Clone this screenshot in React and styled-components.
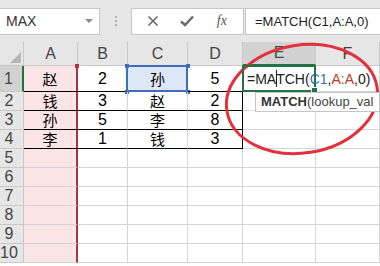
import React from "react";
import styled, { createGlobalStyle } from "styled-components";

const GlobalStyle = createGlobalStyle`
  html, body {
    margin: 0;
    padding: 0;
    background: #fff;
  }
  body {
    width: 380px;
    height: 266px;
    overflow: hidden;
    font-family: "Liberation Sans", "Noto Sans CJK SC", sans-serif;
  }
`;

const GREEN = "#217346";
const RED = "#a8363f";
const BLUE = "#3e6dbb";

const columns = ["A", "B", "C", "D", "E", "F"];

const tableData = [
  ["赵", "2", "孙", "5"],
  ["钱", "3", "赵", "2"],
  ["孙", "5", "李", "8"],
  ["李", "1", "钱", "3"]
];

const Sheet = styled.div`
  position: relative;
  width: 380px;
  height: 266px;
  overflow: hidden;
  background: #fff;
`;

// ============ Formula bar ============
const Toolbar = styled.div`
  display: flex;
  align-items: center;
  height: 42px;
  background: #e6e6e6;
`;

const NameBox = styled.div`
  display: flex;
  align-items: center;
  justify-content: space-between;
  box-sizing: border-box;
  width: 101px;
  height: 27px;
  margin-left: -1px;
  padding: 0 6px 0 6px;
  background: #fff;
  border: 1px solid #c6c6c6;
  font-size: 14px;
  color: #333;
`;

const Caret = styled.span`
  width: 0;
  height: 0;
  border-left: 4px solid transparent;
  border-right: 4px solid transparent;
  border-top: 4px solid #8a8a8a;
`;

const Grip = styled.div`
  display: flex;
  flex-direction: column;
  gap: 2px;
  margin: 0 14px 0 15px;
`;

const GripDot = styled.span`
  width: 2px;
  height: 2px;
  background: #b0b0b0;
`;

const ButtonGroup = styled.div`
  display: flex;
  align-items: center;
  justify-content: space-around;
  box-sizing: border-box;
  width: 113px;
  height: 27px;
  padding: 0 4px;
  background: #fff;
  border: 1px solid #c6c6c6;
`;

const IconButton = styled.span`
  display: flex;
  align-items: center;
  justify-content: center;
  width: 24px;
  color: #555;
  font-family: "Liberation Serif", serif;
  font-style: italic;
  font-size: 14px;
`;

const FormulaInput = styled.div`
  display: flex;
  align-items: center;
  box-sizing: border-box;
  flex: 1;
  height: 27px;
  margin-left: 1px;
  padding-left: 9px;
  background: #fff;
  border: 1px solid #c6c6c6;
  border-right: none;
  font-size: 13px;
  color: #222;
  white-space: nowrap;
`;

// ============ Grid ============
const Grid = styled.div`
  display: grid;
  grid-template-columns: 24px 54px 50px 60px 55px 73px 64px;
  grid-template-rows: 24px 26px repeat(10, 19px);
`;

const Corner = styled.div`
  position: relative;
  box-sizing: border-box;
  background: #e6e6e6;
  border-right: 1px solid #c8c8c8;
  border-bottom: 1px solid #c8c8c8;

  &::after {
    content: "";
    position: absolute;
    right: 2px;
    bottom: 2px;
    width: 0;
    height: 0;
    border-left: 11px solid transparent;
    border-bottom: 11px solid #b6b6b6;
  }
`;

const ColHeader = styled.div`
  display: flex;
  align-items: flex-end;
  justify-content: center;
  box-sizing: border-box;
  padding-bottom: 2px;
  background: ${({ $active }) => ($active ? "#d2d2d2" : "#e6e6e6")};
  border-right: 1px solid #c8c8c8;
  border-bottom: ${({ $active }) =>
    $active ? `2px solid ${GREEN}` : "1px solid #c8c8c8"};
  font-family: "Liberation Sans", sans-serif;
  font-size: 16px;
  line-height: 18px;
  color: ${({ $active }) => ($active ? "#2a5a3a" : "#444")};
`;

const RowHeader = styled.div`
  display: flex;
  align-items: center;
  justify-content: center;
  box-sizing: border-box;
  padding-right: 5px;
  background: ${({ $active }) => ($active ? "#d2d2d2" : "#e6e6e6")};
  border-right: ${({ $active }) =>
    $active ? `2px solid ${GREEN}` : "1px solid #c8c8c8"};
  border-bottom: 1px solid #c8c8c8;
  font-family: "Liberation Sans", sans-serif;
  font-size: 16px;
  line-height: 16px;
  color: #444;
`;

const Cell = styled.div`
  position: relative;
  display: flex;
  align-items: center;
  justify-content: center;
  box-sizing: border-box;
  padding: 0 5px;
  background: ${({ $bg }) => $bg || "transparent"};
  border-right: ${({ $right }) => $right || "1px solid #d4d4d4"};
  border-bottom: ${({ $bottom }) => $bottom || "1px solid #d4d4d4"};
  font-family: ${({ $cjk }) =>
    $cjk ? `"Noto Sans CJK SC", sans-serif` : `"Liberation Sans", sans-serif`};
  font-size: ${({ $cjk }) => ($cjk ? "15px" : "16px")};
  line-height: 16px;
  color: #000;
  white-space: nowrap;
`;

const Handle = styled.span`
  position: absolute;
  width: 4px;
  height: 4px;
  background: ${({ $color }) => $color};
  ${({ $top }) => ($top ? "top: -2px;" : "bottom: -3px;")}
  ${({ $left }) => ($left ? "left: -3px;" : "right: -3px;")}
`;

const RefFrame = styled.span`
  position: absolute;
  inset: -1px -1px -1px -2px;
  border: 2px solid ${({ $color }) => $color};
  pointer-events: none;
`;

const ActiveCell = styled(Cell)`
  z-index: 2;
  justify-content: flex-start;
  overflow: visible;
  padding-left: 4px;
  font-family: "Liberation Sans", sans-serif;
  font-size: 14px;
  color: #222;
`;

const ActiveFrame = styled.span`
  position: absolute;
  inset: -1px -1px -1px -1px;
  border: 2px solid ${GREEN};
  pointer-events: none;

  &::after {
    content: "";
    position: absolute;
    right: -4px;
    bottom: -4px;
    width: 5px;
    height: 5px;
    background: ${GREEN};
    border: 1px solid #fff;
  }
`;

const Ref = styled.span`
  color: ${({ $color }) => $color};
`;

const Cursor = styled.span`
  display: inline-block;
  width: 1px;
  height: 17px;
  margin: 0 -1px 0 0;
  vertical-align: -3px;
  background: #222;
`;

const Tooltip = styled.div`
  position: absolute;
  top: calc(100% + 1px);
  left: 12px;
  padding: 1px 6px 2px 5px;
  background: #fff;
  border: 1px solid #c6c6c6;
  font-family: "Liberation Sans", sans-serif;
  font-size: 13px;
  line-height: 15px;
  color: #444;
  white-space: nowrap;
`;

const Bold = styled.b`
  font-weight: 700;
  color: #333;
`;

const Annotation = styled.svg`
  position: absolute;
  top: 0;
  left: 0;
  pointer-events: none;
`;

const CloseIcon = () => (
  <svg width="12" height="12" viewBox="0 0 12 12">
    <path d="M1.5 1.5 L10.5 10.5 M10.5 1.5 L1.5 10.5" stroke="#6a6a6a" strokeWidth="1.6" />
  </svg>
);

const CheckIcon = () => (
  <svg width="14" height="12" viewBox="0 0 14 12">
    <path d="M1 6.5 L5 10 L13 1.5" stroke="#6a6a6a" strokeWidth="2.4" fill="none" />
  </svg>
);

const BLACK = "1px solid #000";

const App = () => {
  const rows = Array.from({ length: 10 }, (_, i) => i + 1);

  const renderCell = (row, colIdx) => {
    const key = `${row}-${colIdx}`;
    const inTable = row <= 4 && colIdx <= 3;
    const value = inTable ? tableData[row - 1][colIdx] : "";

    if (colIdx === 0) {
      return (
        <Cell
          key={key}
          $bg="#fbe4e5"
          $cjk
          $right={`2px solid ${RED}`}
          $bottom={inTable ? BLACK : undefined}
        >
          {value}
          {row === 1 && <Handle $color={RED} $top />}
        </Cell>
      );
    }

    if (colIdx === 2 && row === 1) {
      return (
        <Cell key={key} $bg="#dde7f5" $cjk $bottom={BLACK}>
          {value}
          <RefFrame $color={BLUE} />
          <Handle $color={BLUE} $top $left />
          <Handle $color={BLUE} $top />
          <Handle $color={BLUE} $left />
          <Handle $color={BLUE} />
        </Cell>
      );
    }

    if (colIdx === 4 && row === 1) {
      return (
        <ActiveCell key={key}>
          <span>
            =MA<Cursor />TCH(<Ref $color="#3e6dbb">C1</Ref>,
            <Ref $color="#c0392b">A:A</Ref>,0)
          </span>
          <ActiveFrame />
          <Tooltip>
            <Bold>MATCH</Bold>(lookup_val
          </Tooltip>
        </ActiveCell>
      );
    }

    return (
      <Cell
        key={key}
        $cjk={colIdx === 2}
        $bottom={inTable ? BLACK : undefined}
        $right={colIdx === 3 && row <= 4 ? BLACK : undefined}
      >
        {value}
      </Cell>
    );
  };

  return (
    <>
      <GlobalStyle />
      <Sheet>
        <Toolbar>
          <NameBox>
            MAX
            <Caret />
          </NameBox>
          <Grip>
            <GripDot />
            <GripDot />
            <GripDot />
          </Grip>
          <ButtonGroup>
            <IconButton>
              <CloseIcon />
            </IconButton>
            <IconButton>
              <CheckIcon />
            </IconButton>
            <IconButton>fx</IconButton>
          </ButtonGroup>
          <FormulaInput>=MATCH(C1,A:A,0)</FormulaInput>
        </Toolbar>

        <Grid>
          <Corner />
          {columns.map((c) => (
            <ColHeader key={c} $active={c === "E"}>
              {c}
            </ColHeader>
          ))}
          {rows.map((row) => (
            <React.Fragment key={row}>
              <RowHeader $active={row === 1}>{row}</RowHeader>
              {columns.map((_, colIdx) => renderCell(row, colIdx))}
            </React.Fragment>
          ))}
        </Grid>

        <Annotation width="380" height="266" viewBox="0 0 380 266">
          <ellipse
            cx="302"
            cy="99"
            rx="76"
            ry="54"
            transform="rotate(-9 302 99)"
            fill="none"
            stroke="#e4303a"
            strokeWidth="3"
          />
        </Annotation>
      </Sheet>
    </>
  );
};

export default App;
